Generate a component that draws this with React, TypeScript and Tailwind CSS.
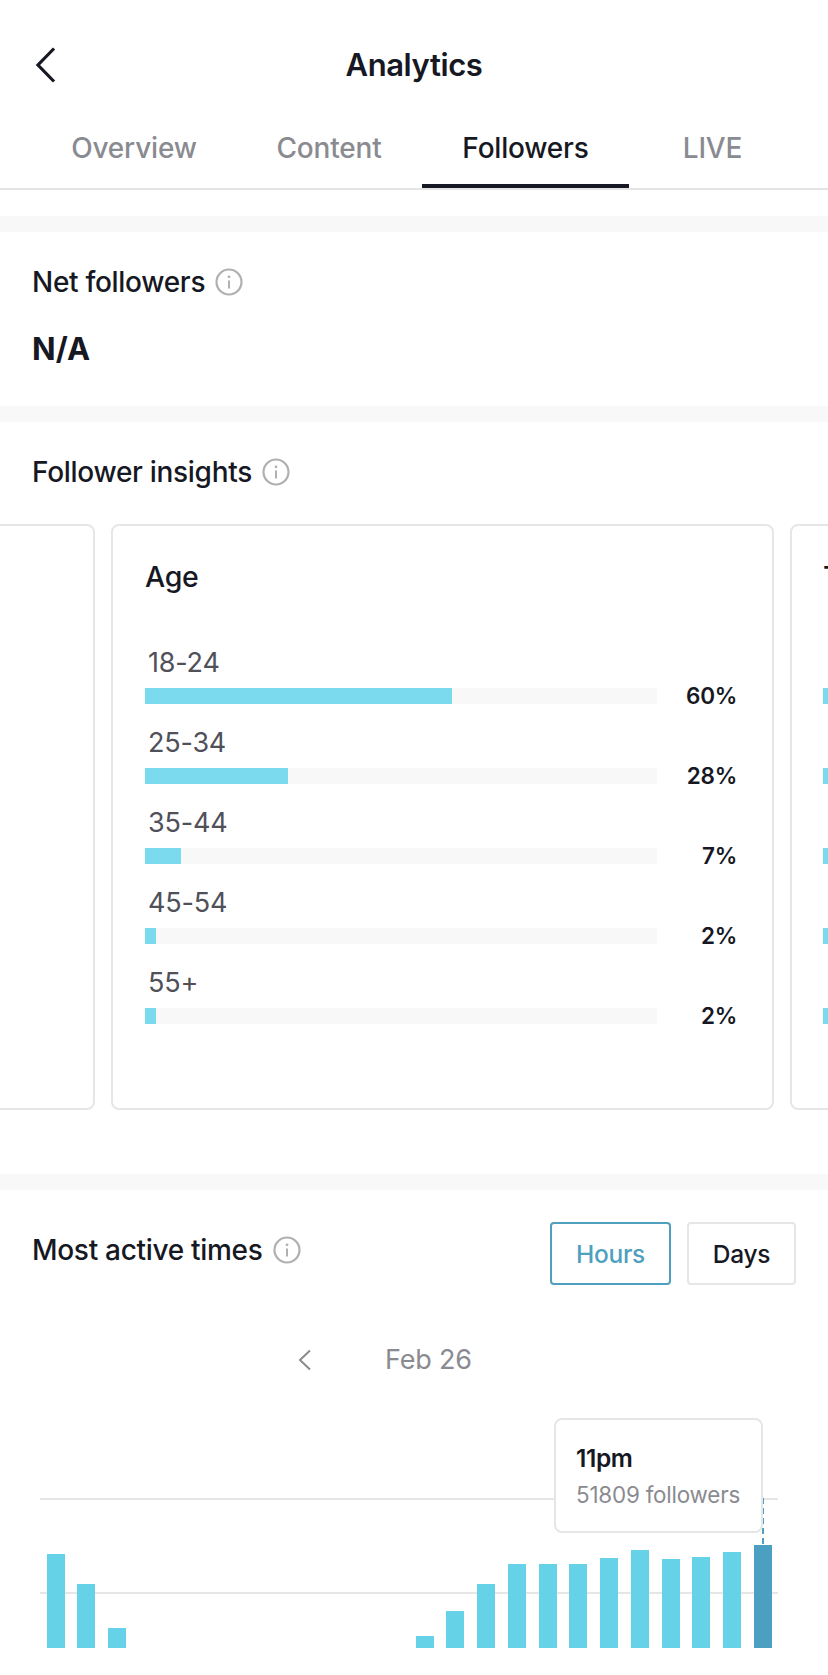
const font = { fontFamily: '"Inter", "Liberation Sans", sans-serif' };

const ageRows = [
  { label: '18-24', pct: 60, fill: 'w-[307px]' },
  { label: '25-34', pct: 28, fill: 'w-[143px]' },
  { label: '35-44', pct: 7, fill: 'w-[36px]' },
  { label: '45-54', pct: 2, fill: 'w-[11px]' },
  { label: '55+', pct: 2, fill: 'w-[11px]' },
];

// 24 hours, 0 = no bar
const hours = [94, 64, 20, 0, 0, 0, 0, 0, 0, 0, 0, 0, 12, 37, 64, 84, 84, 84, 90, 98, 89, 91, 96, 103];

function InfoIcon() {
  return (
    <svg className="w-[28px] h-[28px] shrink-0" viewBox="0 0 28 28" fill="none">
      <circle cx="14" cy="14" r="12.5" stroke="#b0b0b2" strokeWidth="2.2" />
      <circle cx="14" cy="8.8" r="1.4" fill="#b0b0b2" />
      <path d="M14 12.5v8" stroke="#b0b0b2" strokeWidth="2" />
    </svg>
  );
}

function Band() {
  return <div className="h-[16px] bg-[#f8f8f8]" />;
}

function SectionTitle({ children }: { children: string }) {
  return (
    <div className="flex items-center gap-[10px]">
      <span className="text-[28px] leading-[30px] font-medium tracking-[-0.3px] text-[#161823]">{children}</span>
      <InfoIcon />
    </div>
  );
}

export default function App() {
  return (
    <div className="w-[828px] h-[1675px] overflow-hidden bg-white" style={font}>
      <header className="pt-[47px]">
        <div className="grid grid-cols-[1fr_auto_1fr] items-center h-[35px] pl-[36px]">
          <svg className="w-[20px] h-[36px] self-start" viewBox="0 0 20 36" fill="none">
            <path d="M18 1.5 2 18l16 16.5" stroke="#161823" strokeWidth="3.2" />
          </svg>
          <h1 className="text-[31px] leading-[35px] pb-[6px] font-semibold tracking-[-0.4px] text-[#161823] -ml-[36px]">Analytics</h1>
          <div />
        </div>
        <nav className="flex h-[108px] border-b-2 border-[#e4e4e6] pl-[32px] text-[#8a8b91] text-[28px] font-medium tracking-[-0.2px]">
          <div className="w-[204px] flex items-end justify-center pb-[19px]">Overview</div>
          <div className="w-[186px] flex items-end justify-center pb-[19px]">Content</div>
          <div className="w-[207px] flex items-end justify-center pb-[15px] border-b-4 border-[#161823] text-[#161823]">Followers</div>
          <div className="w-[167px] flex items-end justify-center pb-[19px]">LIVE</div>
        </nav>
      </header>

      <div className="h-[26px]" />
      <Band />

      <section className="h-[174px] pl-[32px] pt-[35px]">
        <SectionTitle>Net followers</SectionTitle>
        <div className="mt-[33px] text-[31px] leading-[38px] font-bold text-[#161823]">N/A</div>
      </section>

      <Band />

      <section className="h-[752px] pt-[35px]">
        <div className="pl-[32px]">
          <SectionTitle>Follower insights</SectionTitle>
        </div>
        <div className="mt-[37px] flex gap-[16px] h-[586px] -ml-[100px] w-[1000px]">
          <div className="w-[195px] shrink-0 rounded-[8px] border-2 border-[#e6e6e6]" />
          <div className="w-[663px] shrink-0 rounded-[8px] border-2 border-[#e6e6e6] pl-[32px] pt-[35px]">
            <h3 className="text-[28.5px] leading-[32px] font-medium tracking-[-0.3px] text-[#161823]">Age</h3>
            <div className="mt-[52px] flex flex-col">
              {ageRows.map((r) => (
                <div key={r.label} className="h-[80px]">
                  <div className="pl-[3px] text-[27px] leading-[36px] text-[#505059] tracking-[-0.2px]">{r.label}</div>
                  <div className="flex items-center h-[16px] mt-[7px]">
                    <div className="w-[512px] h-[16px] bg-[#f8f8f8]">
                      <div className={`h-full bg-[#7cdaee] ${r.fill}`} />
                    </div>
                    <div className="w-[80px] text-right text-[22.5px] font-semibold tracking-[-0.3px] text-[#161823]">{r.pct}%</div>
                  </div>
                </div>
              ))}
            </div>
          </div>
          <div className="w-[300px] shrink-0 rounded-[8px] border-2 border-[#e6e6e6] pl-[31px] pt-[35px]">
            <h3 className="text-[28.5px] leading-[32px] font-medium text-[#161823]">Top</h3>
            <div className="mt-[52px] flex flex-col">
              {ageRows.map((r) => (
                <div key={r.label} className="h-[80px] pt-[43px]">
                  <div className="w-[11px] h-[16px] bg-[#7cdaee]" />
                </div>
              ))}
            </div>
          </div>
        </div>
      </section>

      <Band />

      <section className="pt-[32px]">
        <div className="flex items-center justify-between pl-[32px] pr-[32px] h-[63px]">
          <div className="-mt-[8px]">
            <SectionTitle>Most active times</SectionTitle>
          </div>
          <div className="flex gap-[16px] text-[24.5px] font-medium tracking-[-0.3px]">
            <button className="w-[121px] h-[63px] pt-[1px] rounded-[4px] border-2 border-[#4f9fbe] text-[#4f9fbe]">Hours</button>
            <button className="w-[109px] h-[63px] pt-[1px] rounded-[4px] border-2 border-[#e6e6e6] text-[#161823]">Days</button>
          </div>
        </div>

        <div className="flex items-center h-[40px] mt-[55px] pl-[298px] gap-[74px] text-[#8a8b91]">
          <svg className="w-[13px] h-[22px]" viewBox="0 0 13 22" fill="none">
            <path d="M12 1.5 2 11l10 9.5" stroke="#8a8b91" strokeWidth="2" />
          </svg>
          <span className="text-[27px] tracking-[-0.2px]">Feb 26</span>
        </div>

        <div className="relative mt-[38px] ml-[40px] w-[738px] h-[230px]">
          {/* grid lines */}
          <div className="absolute left-0 right-0 top-[80px] h-[2px] bg-[#e6e6e6]" />
          <div className="absolute left-0 right-0 top-[174px] h-[2px] bg-[#e6e6e6]" />

          {/* tooltip's dashed line */}
          <div className="absolute left-[722px] top-[80px] h-[46px] border-l-2 border-dashed border-[#4f9fbe]" />

          <div className="absolute inset-x-0 bottom-0 h-[110px] pl-[6.5px] flex items-end gap-[12.75px]">
            {hours.map((h, i) => (
              <div
                key={i}
                className={i === 23 ? 'w-[18px] bg-[#4b9fc1]' : 'w-[18px] bg-[#66d2e8]'}
                style={{ height: h }}
              />
            ))}
          </div>

          <div className="absolute left-[514px] top-0 w-[209px] h-[115px] rounded-[8px] border-2 border-[#e6e6e6] bg-white pl-[20px] pt-[23px]">
            <div className="text-[24.5px] leading-[30px] font-semibold tracking-[-0.4px] text-[#161823]">11pm</div>
            <div className="mt-[7px] text-[22.4px] leading-[30px] text-[#8a8b91] tracking-[-0.2px]">51809 followers</div>
          </div>
        </div>
      </section>
    </div>
  );
}
